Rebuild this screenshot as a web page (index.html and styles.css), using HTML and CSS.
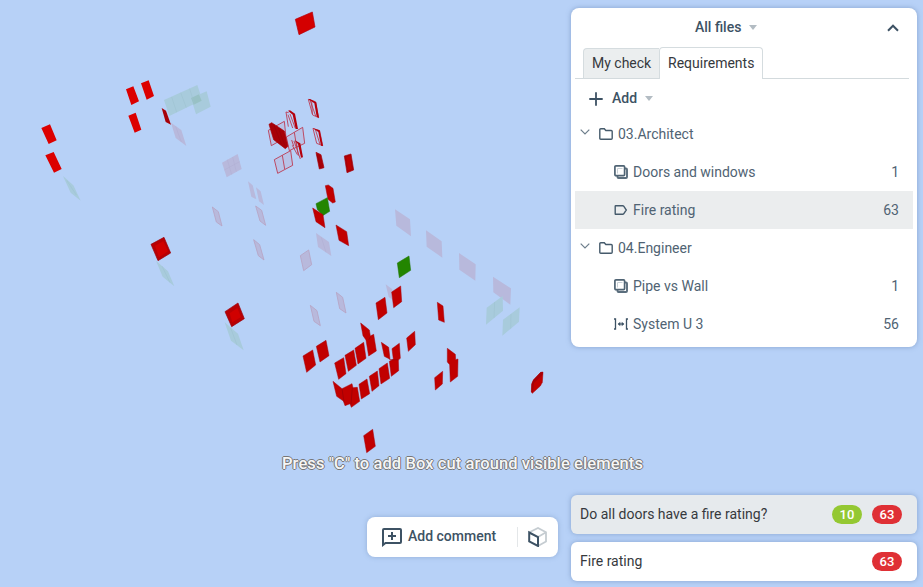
FILE: index.html
```html
<!DOCTYPE html>
<html lang="en">
<head>
<meta charset="utf-8">
<title>Model check</title>
<link rel="stylesheet" href="styles.css">
</head>
<body>
<svg width="0" height="0" class="defs">
  <symbol id="folder" viewBox="0 0 14 12"><path d="M.8 10.2V1.8Q.8.8 1.8.8h3.500l1.500 1.700h5.400q1 0 1 1v6.700q0 1-1 1H1.800q-1 0-1-1z" fill="none" stroke="#455a6b" stroke-width="1.4"/></symbol>
  <symbol id="overlap" viewBox="0 0 14 14"><path d="M3.500 8.500v-5h5" fill="none" stroke="#c8d0d6"/><path d="M10.500 3.500H12q1 0 1 1V12q0 1-1 1H4.500q-1 0-1-1v-1.500" fill="none" stroke="#5b6e7d" stroke-width="1.900"/><rect x=".9" y=".9" width="9.700" height="9.700" rx="1" fill="none" stroke="#506474" stroke-width="1.700"/></symbol>
  <symbol id="chevron" viewBox="0 0 10 6"><path d="M.7.7 5 5 9.300.7" fill="none" stroke="#6d7e8b" stroke-width="1.2"/></symbol>
</svg>
<div class="viewport">
  <svg class="model" width="923" height="587" viewBox="0 0 923 587">
    <g transform="translate(30 70) scale(.33333)">
      <path class="glass" d="M402 90 502 45 517 90 418 138zM483 84 530 64 542 110 498 133zM99 318 130 346 152 392 122 368zM378 572 414 604 433 649 398 620z"/>
      <path class="overlap" d="M483 84 507 73 515 92 491 104z"/>
      <path class="glass-line" d="M425 81 440 127M452 68 469 113M479 56 493 102M110 331 139 375M396 588 420 638"/>
      <path class="ghost" d="M423 158 454 180 469 228 437 204z"/>
      <path class="ghost-line" d="M437 169 454 216"/>
      <path class="bright" d="M34 174 60 163 80 211 56 222zM46 256 71 246 95 297 72 308zM288 58 310 49 327 94 304 105zM333 40 356 31 372 78 350 89zM295 137 317 128 334 179 314 188z"/>
      <path class="dark" d="M395 114 408 122 423 164 407 156z"/>
      <path class="rim" d="M363 523 402 502 422 549 384 572z"/>
      <path class="core" d="M375 527 400 514 414 544 387 562z"/>
    </g>
    <g transform="translate(205 0) scale(.33333)">
      <path class="top" d="M271 58 322 36 330 81 282 104z"/>
      <path class="ghost" d="M51 488 98 462 110 507 65 532z"/>
      <path class="ghost-line" d="M67 479 80 524M83 471 94 515M58 510 104 485"/>
      <path class="frame" d="M190 391 238 364 243 412 199 437zM215 377 220 424M244 411 293 382 299 430 253 452zM268 397 275 441M208 479 257 452 263 496 218 520zM232 466 239 507"/>
      <path class="frame open" d="M310 298 331 305 341 353 323 345zM315 300 332 348M320 304 322 342M243 336 250 380M243 336 251 338M249 344 263 384M255 342 271 385M324 385 344 392 353 437 335 430zM331 388 345 433M260 420 266 438M267 423 286 477M274 425 280 467M262 436 277 464"/>
      <path class="edge" d="M310 298 315 297 334 307 342 354 335 350 328 310zM249 332 255 331 270 341 279 387 272 387 263 344zM324 385 344 391 354 438 348 437 340 396zM268 420 286 430 294 472 288 473 279 432z"/>
      <path class="dark thick" d="M192 373 200 368 238 393 249 439 241 446 206 419zM333 457 348 464 357 503 343 507zM418 468 438 462 446 510 426 518z"/>
      <path class="seam" d="M206 373 229 432M220 384 240 437M336 463 347 504"/>
      <path class="center" d="M424 472 436 467 440 506 429 511z"/>
    </g>
    <g transform="translate(205 170) scale(.33333)">
      <path class="ghost" d="M129 34 143 46 154 88 139 80zM153 52 167 64 177 105 162 94zM333 189 372 216 379 258 339 231z"/>
      <path class="ghost-line" d="M349 202 363 247"/>
      <path class="ghost outlined" d="M22 111 40 125 51 168 34 156zM152 108 170 121 182 166 165 153zM146 209 164 224 177 270 160 257zM286 257 311 240 320 284 296 302zM316 406 336 422 346 467 327 454zM394 367 413 382 423 429 404 416z"/>
      <path class="glass" d="M59 457 99 491 116 541 78 512z"/>
      <path class="glass-line" d="M77 474 96 525"/>
      <path class="rim" d="M60 425 99 399 118 446 80 470z"/>
      <path class="core" d="M74 430 97 414 108 441 82 457z"/>
      <path class="red" d="M361 47 370 45 384 55 391 96 383 99 369 88z"/>
      <path class="green" d="M333 101 367 83 374 124 353 137 337 118z"/>
      <path class="red" d="M323 114 354 134 360 173 333 155zM393 165 425 185 431 227 402 211z"/>
    </g>
    <g transform="translate(290 280) scale(.33333)">
      <path class="ghost" d="M287 13 306 27 318 67 296 51z"/>
      <g class="red">
        <path d="M258 69 285 52 291 99 265 119zM305 36 332 18 335 65 311 83zM350 174 374 154 376 194 355 214zM39 228 68 210 77 255 50 277zM79 199 108 181 117 227 90 246z"/>
        <path d="M212 129 238 150 241 168 251 163 259 213 236 228 228 180 219 167zM134 249 161 233 168 281 146 298zM165 226 191 210 199 256 175 274zM195 205 221 187 228 235 204 252z"/>
        <path d="M274 187 296 202 300 238 283 229zM306 206 328 190 331 235 325 240 326 272 304 289 298 244 310 238zM267 266 292 249 299 295 273 312zM238 289 262 273 267 317 246 334zM207 313 231 297 239 341 214 357zM129 304 156 326 186 311 189 323 202 322 209 364 184 382 180 371 165 377 160 363 140 349zM221 467 248 448 256 499 230 518z"/>
      </g>
      <path class="seam" d="M156 326 162 365M187 323 183 374M236 180 241 171M299 239 325 239"/>
    </g>
    <g transform="translate(370 195) scale(.33333)">
      <path class="ghost" d="M75 43 120 73 123 124 79 92zM168 106 215 139 217 188 170 155zM267 174 317 208 316 257 268 224zM369 245 423 280 421 329 370 292z"/>
      <path class="glass" d="M350 338 398 303 399 347 348 389zM399 374 449 337 447 380 397 422z"/>
      <path class="glass-line" d="M374 321 372 369M423 357 422 401"/>
      <path class="green" d="M82 204 117 183 122 226 88 248z"/>
      <path class="red" d="M202 322 219 333 223 382 206 375zM232 460 256 478 257 494 264 492 263 544 241 561 239 509 232 501zM194 548 218 529 217 567 196 585z"/>
      <path class="red" d="M485 567 490 555 512 532 519 531 517 562 511 573 487 595 484 591z"/>
      <path class="dark" d="M485 567 490 555 512 532 519 531 517 540 492 564 489 592 484 591z"/>
    </g>
  </svg>

  <p class="hint">Press "C" to add Box cut around visible elements</p>

  <div class="toolbar">
    <svg width="20" height="19" viewBox="0 0 20 19"><path d="M1 17V2q0-1 1-1h16q1 0 1 1v12q0 1-1 1H3.500z" fill="none" stroke="#3d5264" stroke-width="2"/><path d="M10 4v8M6 8h8" stroke="#3d5264" stroke-width="2"/></svg>
    <span class="comment">Add comment</span>
    <span class="divider"></span>
    <svg class="cube" width="20" height="20" viewBox="0 0 20 20" fill="none" stroke-width="1.800"><path d="M1.500 5.300 10 1l8 4.300v9.200L10 19M10 10l8-4.700" stroke="#c5ccd1"/><path d="M1.200 5.500 10 10v9l-8.800-4.500z" stroke="#3d5264" stroke-width="2"/></svg>
  </div>

  <section class="panel">
    <header class="head"><span>All files</span><i class="caret"></i>
      <svg class="collapse" width="12" height="8" viewBox="0 0 12 8"><path d="M1 6.700 6 1.700l5 5" fill="none" stroke="#3d5264" stroke-width="2"/></svg>
    </header>
    <nav class="tabs"><span class="tab">My check</span><span class="tab active">Requirements</span></nav>
    <div class="add"><svg width="14" height="14" viewBox="0 0 14 14"><path d="M7 .3v13.400M.3 7h13.400" stroke="#3d5264" stroke-width="1.800"/></svg><span>Add</span><i class="caret"></i></div>
    <ul class="tree">
      <li class="group"><svg class="chev" width="10" height="6"><use href="#chevron"/></svg><svg width="14" height="12"><use href="#folder"/></svg><span>03.Architect</span></li>
      <li><svg width="14" height="14"><use href="#overlap"/></svg><span>Doors and windows</span><b>1</b></li>
      <li class="selected"><svg width="14" height="14" viewBox="0 0 14 14"><path d="M1.700 2.700h7q.6 0 1 .5L12.300 7l-2.600 3.800q-.4.500-1 .5h-7q-.5 0-.5-.5V3.200q0-.5.500-.5z" fill="none" stroke="#455a6b" stroke-width="1.400"/></svg><span>Fire rating</span><b>63</b></li>
      <li class="group"><svg class="chev" width="10" height="6"><use href="#chevron"/></svg><svg width="14" height="12"><use href="#folder"/></svg><span>04.Engineer</span></li>
      <li><svg width="14" height="14"><use href="#overlap"/></svg><span>Pipe vs Wall</span><b>1</b></li>
      <li><svg width="14" height="14" viewBox="0 0 14 14"><path d="M0 2h1.500v10H0M14 2h-1.500v10H14" fill="none" stroke="#3d5264" stroke-width="1.300"/><path d="M4.500 7h5" stroke="#3d5264" stroke-width="1.200"/><path d="M3.700 7 6.300 4.800v4.400zM10.300 7 7.700 4.800v4.400z" fill="#3d5264"/></svg><span>System U 3</span><b>56</b></li>
    </ul>
  </section>

  <section class="results">
    <div class="result current"><span>Do all doors have a fire rating?</span><em class="pill ok">10</em><em class="pill">63</em></div>
    <div class="result"><span>Fire rating</span><em class="pill">63</em></div>
  </section>
</div>
</body>
</html>
```
FILE: styles.css
```css
* { box-sizing: border-box; }
body { margin: 0; font: 14px/20px Roboto, sans-serif; color: #3d5264; }
svg { display: block; flex: none; }
.defs { position: absolute; }
.viewport { position: relative; width: 923px; height: 587px; overflow: hidden; background: #b7d1f7; }
.model { position: absolute; inset: 0; }

.bright { fill: #dc0000; }
.top { fill: #d40000; stroke: #b5000c; stroke-width: 2; stroke-linejoin: round; }
.red { fill: #c10000; stroke: #ab0008; stroke-width: 1.5; }
.dark { fill: #a70007; }
.thick { stroke: #a70007; stroke-width: 2; stroke-linejoin: round; }
.rim { fill: #b80004; stroke: #99000a; stroke-width: 2; }
.core { fill: #d00000; }
.center { fill: #bd0000; }
.edge { fill: #b5000c; }
.green { fill: #238500; stroke: #1d7200; stroke-width: 1.5; }
.ghost { fill: #b8b9dc; }
.outlined { stroke: #b7a3c3; stroke-width: 2.5; }
.ghost-line { fill: none; stroke: #b1aed2; stroke-width: 1.5; }
.glass { fill: #a8cbdc; }
.overlap { fill: #98c1c5; }
.glass-line { fill: none; stroke: #9bc0cf; stroke-width: 1.5; }
.frame { fill: #b9b9dd99; stroke: #bd3047; stroke-width: 2.5; }
.open { fill: none; }
.seam { fill: none; stroke: #950008; stroke-width: 2; }

.hint {
  position: absolute; left: 282px; top: 453px; margin: 0;
  font-size: 16.5px; font-weight: 500; line-height: 22px; letter-spacing: .09px; color: #f6f6f6; white-space: nowrap;
  text-shadow: 1px 0 #777, -1px 0 #777, 0 1px #777, 0 -1px #777;
}

.toolbar {
  position: absolute; left: 367px; top: 517px; width: 191px; height: 40px;
  display: flex; align-items: center; padding-left: 15px;
  background: #fff; border-radius: 8px; box-shadow: 0 0 5px #5c7aa866;
}
.comment { width: 88px; margin: -2px 0 0 6px; font-weight: 500; white-space: nowrap; }
.divider { width: 1px; height: 20px; margin: 0 10px 0 21px; background: #e4e7e9; }

.panel {
  position: absolute; left: 571px; top: 8px; width: 346px; height: 339px;
  padding: 0 4px; background: #fff; border-radius: 8px; box-shadow: 0 0 5px #5c7aa888;
}
.head { position: relative; display: flex; align-items: center; height: 39px; padding-left: 120px; font-weight: 500; }
.head span { margin-top: -1px; }
.caret { margin-left: 8px; border: 4px solid transparent; border-top: 5px solid #b3bcc3; border-bottom: 0; }
.collapse { position: absolute; right: 14px; top: 16px; }
.tabs { display: flex; align-items: flex-end; height: 32px; padding-left: 8px; background: linear-gradient(#d3dadd, #d3dadd) 0 31px / 334px 1px no-repeat; color: #36393d; }
.tab { width: 76px; height: 31px; padding: 4px 0 0 8px; border: 1px solid #d5dcdf; border-bottom-color: #d3dadd; border-right: 0; border-radius: 4px 0 0 0; background: #ebeeef; white-space: nowrap; }
.active { width: 104px; height: 32px; padding-top: 5px; border: 1px solid #d5dcdf; border-bottom: 0; border-radius: 4px 4px 0 0; background: #fff; }
.add { display: flex; align-items: center; height: 36px; padding: 3px 0 0 14px; font-weight: 500; }
.add span { margin: -1px 0 0 9px; }

.tree { list-style: none; margin: 0; padding: 0; color: #506373; }
.tree li { display: flex; align-items: center; height: 38px; padding: 0 14px 0 39px; }
.tree span { margin-left: 5px; }
.tree b { margin-left: auto; font-weight: 400; }
.tree .group { padding-left: 5px; }
.chev { margin: -4px 9px 0 0; }
.selected { background: #ebedee; }

.results { position: absolute; left: 571px; top: 495px; width: 346px; display: grid; gap: 8px; color: #36393d; }
.result { display: flex; align-items: center; height: 39px; padding: 0 15px 0 9px; gap: 10px; background: #fff; border-radius: 6px; box-shadow: 0 0 5px #5c7aa888; }
.result span { margin: -1px auto 0 0; }
.current { background: #e6eaed; }
.pill { width: 30px; height: 19px; border-radius: 10px; background: #df3035; color: #fff; font: 500 13px/19px Roboto, sans-serif; text-align: center; }
.ok { background: #94c832; }
```
